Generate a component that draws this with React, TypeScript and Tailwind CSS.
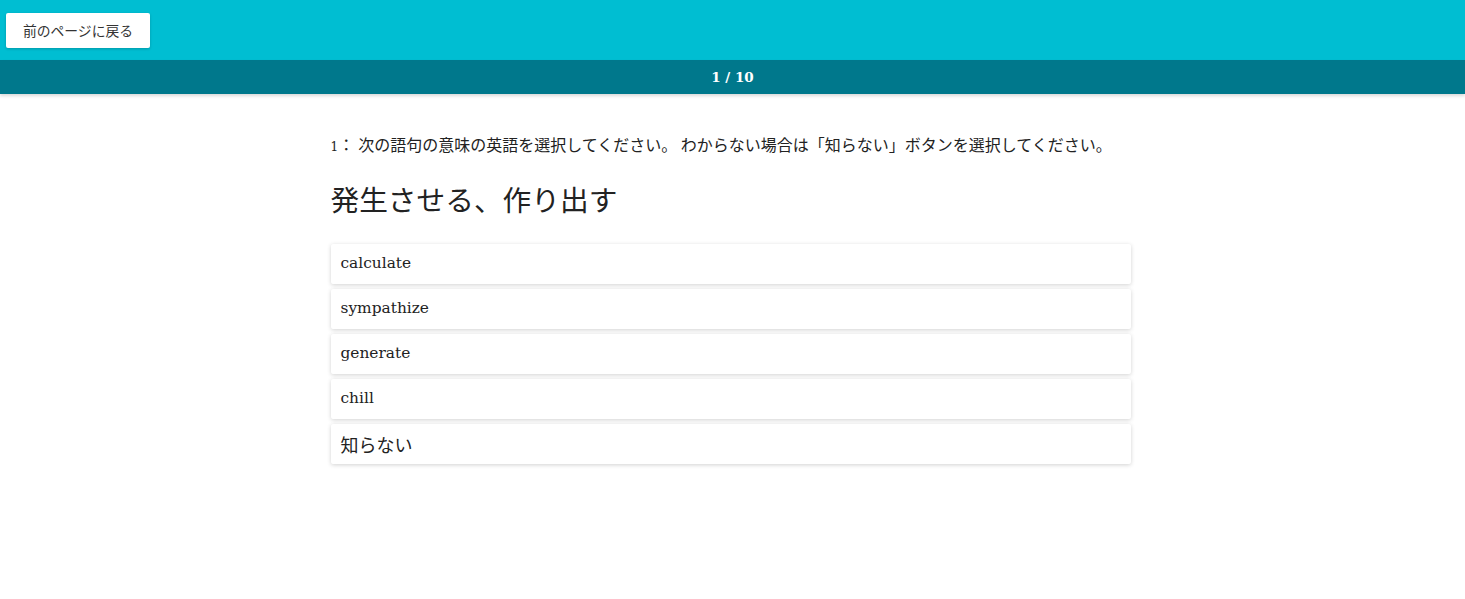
import React from 'react';

const choices = ['calculate', 'sympathize', 'generate', 'chill', '知らない'];

const serif = 'font-["Georgia","DejaVu_Serif","Noto_Sans_CJK_JP",serif]';
const jp = "font-['Noto_Sans_CJK_JP',sans-serif]";

export default function App() {
  return (
    <div className="min-h-screen bg-white text-[#222]">
      {/* Header */}
      <div className="h-[60px] bg-[#00bed2] flex items-center px-[6px]">
        <button className={`h-[35px] w-[144px] bg-white rounded-[2px] shadow-[0_1px_3px_rgba(0,0,0,0.2)] text-[13.8px] text-[#333] ${jp}`}>
          前のページに戻る
        </button>
      </div>
      <div className="h-[34px] bg-[#00788c] flex items-center justify-center shadow-[0_2px_3px_rgba(0,0,0,0.15)]">
        <span className={`text-white font-bold text-[13.5px] ${serif}`}>1 / 10</span>
      </div>

      {/* Question */}
      <div className="w-[804px] pr-[4px] mx-auto pt-[38px]">
        <p className={`text-[16px] leading-[24px] whitespace-nowrap ${jp}`}>
          <span className={`text-[12px] ${serif}`}>1</span>：
          <span className="ml-[4px]">次の語句の意味の英語を選択してください。 わからない場合は「知らない」ボタンを選択してください。</span>
        </p>
        <h1 className={`mt-[20px] text-[28.7px] leading-[40px] font-normal ${jp}`}>
          発生させる、作り出す
        </h1>
        <div className="mt-[25px] flex flex-col gap-[5px]">
          {choices.map((c) => (
            <div
              key={c}
              className={`h-[40px] flex items-center px-[10px] bg-white rounded-[2px] shadow-[0_1px_4px_rgba(0,0,0,0.18)] ${
                c === '知らない' ? `text-[18px] ${jp}` : 'font-["DejaVu_Serif",serif] text-[15.4px]'
              }`}
            >
              {c}
            </div>
          ))}
        </div>
      </div>
    </div>
  );
}
